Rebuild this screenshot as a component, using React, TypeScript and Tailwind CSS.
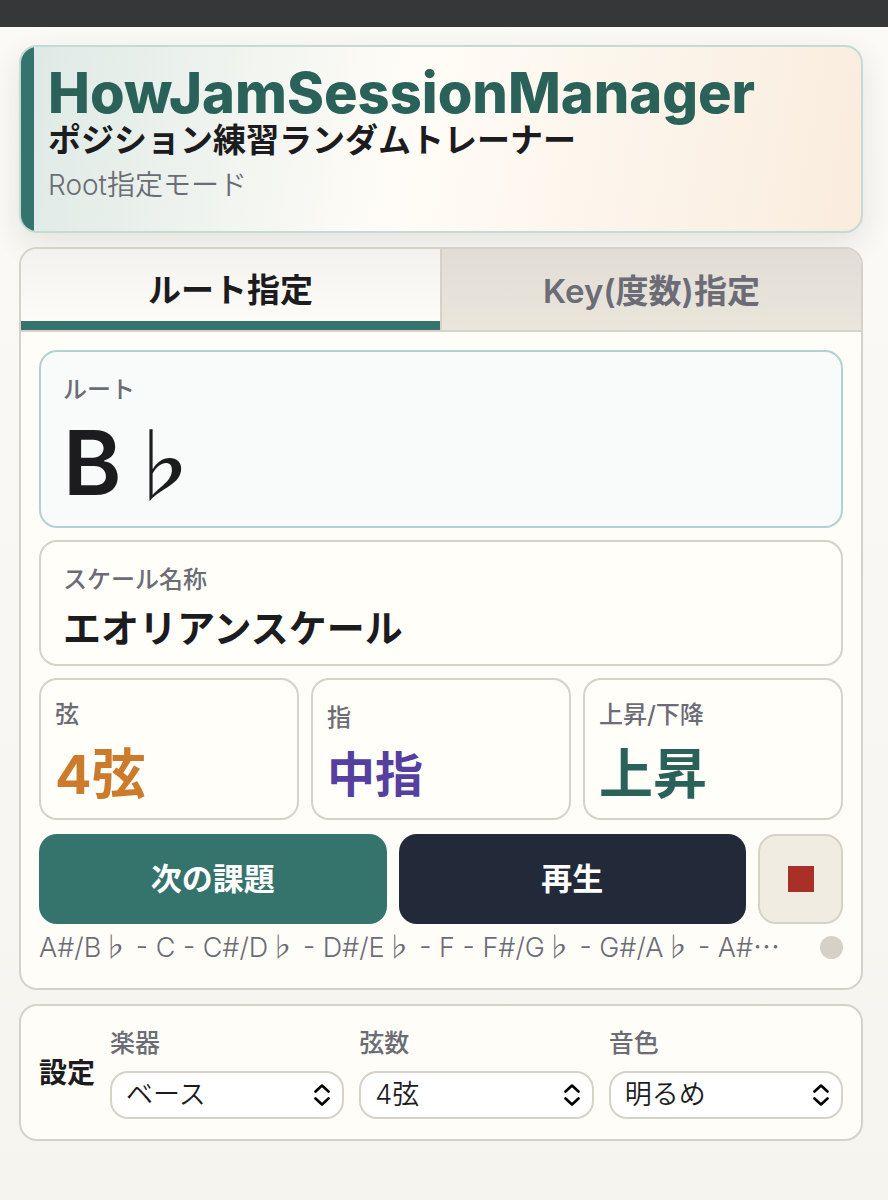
import { Fragment, useState } from 'react';

const japanese = "font-['Inter','Noto_Sans_CJK_JP',sans-serif]";

const notes = 'A#/B♭ - C - C#/D♭ - D#/E♭ - F - F#/G♭ - G#/A♭ - A#';

const settings = [
  { id: 'instrument', label: '楽器', options: ['ベース', 'ギター'] },
  { id: 'strings', label: '弦数', options: ['4弦', '5弦', '6弦'] },
  { id: 'tone', label: '音色', options: ['明るめ', '暗め'] },
];

const results = [
  { label: '弦', value: '4弦', style: 'text-[54px] leading-[76px] text-[#cb7b2b]' },
  { label: '指', value: '中指', style: 'text-[48px] leading-[70px] text-[#5540a0]' },
  { label: '上昇/下降', value: '上昇', style: 'text-[54px] leading-[76px] text-[#2a6259]' },
];

// Flat sign and ellipsis always come from the Japanese font, at full width
function Symbol({ children }: { children: string }) {
  return <span className="font-['Noto_Sans_CJK_JP',sans-serif]">{children}</span>;
}

function SettingSelect({ id, label, options }: { id: string; label: string; options: string[] }) {
  return (
    <div className="min-w-0 flex-1">
      <label htmlFor={id} className="block text-[25px] leading-8 font-medium text-[#6b6c75]">
        {label}
      </label>
      <div className="relative mt-3">
        <select
          id={id}
          className="block h-12 w-full appearance-none rounded-[18px] border-2 border-[#d6d2c8] bg-white px-3.5 text-[27px] leading-10 font-[350] text-[#1c1c1f]"
        >
          {options.map((option) => (
            <option key={option}>{option}</option>
          ))}
        </select>
        <svg
          className="pointer-events-none absolute top-3 right-3.5 h-6 w-4"
          viewBox="0 0 16 24"
          fill="none"
          stroke="black"
          strokeWidth="2.6"
          strokeLinecap="round"
          strokeLinejoin="round"
        >
          <path d="M1.5 8.5 8 2.5l6.5 6M1.5 15.5 8 21.5l6.5-6" />
        </svg>
      </div>
    </div>
  );
}

export default function App() {
  const [mode, setMode] = useState('root');

  const tabStyle = (active: boolean) =>
    active
      ? 'border-b-[9px] border-[#35736d] pt-3 text-[#1c1c1f]'
      : 'bg-linear-to-b from-[#e1dcd5] to-[#ebe6dc] pt-1 text-[#6b6c75]';

  return (
    <div lang="ja" className={`min-h-screen bg-linear-to-b from-[#fbfaf6] to-[#f5f4ef] ${japanese}`}>
      <div className="h-[27px] bg-[#363739]" />
      <div className="pt-[18px] pr-[25px] pb-[60px] pl-[19px]">
        <header className="flex h-[188px] overflow-hidden rounded-[18px] border-2 border-[#c3dbd4] bg-linear-100 from-[#dde9e5] via-[#fffcf7] via-45% to-[#f9ecdd] shadow-[0_10px_30px_rgba(30,30,40,0.1)]">
          <div className="w-[13px] shrink-0 bg-[#35736d]" />
          <div className="pt-[18px] pl-3.5">
            <h1 className="text-[56px] leading-[56px] font-extrabold text-[#2a6259]">HowJamSessionManager</h1>
            <p className="text-[33px] leading-[38px] font-bold text-[#1c1c1f]">ポジション練習ランダムトレーナー</p>
            <p className="mt-1.5 text-[28px] leading-10 font-[350] text-[#6b6c75]">Root指定モード</p>
          </div>
        </header>

        <main className="mt-3.5 overflow-hidden rounded-[18px] border-2 border-[#d6d2c8] bg-[#fffdf8]">
          <div role="tablist" className="flex h-[83px] border-b-2 border-[#d6d2c8] bg-linear-to-b from-[#f3f2ee] to-[#fffdfa] text-[33px]">
            <button
              type="button"
              role="tab"
              aria-selected={mode === 'root'}
              onClick={() => setMode('root')}
              className={`flex-1 font-bold ${tabStyle(mode === 'root')}`}
            >
              ルート指定
            </button>
            <div className="w-0.5 bg-[#d6d2c8]" />
            <button
              type="button"
              role="tab"
              aria-selected={mode === 'key'}
              onClick={() => setMode('key')}
              className={`flex-1 font-semibold ${tabStyle(mode === 'key')}`}
            >
              Key(度数)指定
            </button>
          </div>

          <div className="px-[18px] pt-[18px] pb-5">
            <section className="h-[178px] rounded-[18px] border-2 border-[#b0d3d2] bg-[#f9fbfb] px-[22px] pt-5">
              <h2 className="text-[24px] leading-9 font-medium text-[#6b6c75]">ルート</h2>
              <p className="mt-1 text-[89px] leading-[96px] font-semibold text-[#1c1c1f]">
                B<span className="text-[80px] font-medium"><Symbol>♭</Symbol></span>
              </p>
            </section>

            <section className="mt-3 h-[126px] rounded-[18px] border-2 border-[#d6d2c8] bg-[#fffef9] px-[22px] pt-5">
              <h2 className="text-[24px] leading-9 font-medium text-[#6b6c75]">スケール名称</h2>
              <p className="mt-1 text-[38px] leading-[52px] font-bold text-[#1c1c1f]">エオリアンスケール</p>
            </section>

            <div className="mt-3 grid grid-cols-3 gap-3">
              {results.map(({ label, value, style }) => (
                <section
                  key={label}
                  className="flex h-[142px] flex-col justify-center rounded-[18px] border-2 border-[#d6d2c8] bg-[#fffef9] px-3.5 pt-3"
                >
                  <h2 className="text-[24px] leading-9 font-medium text-[#6b6c75]">{label}</h2>
                  <p className={`mt-1 font-bold ${style}`}>{value}</p>
                </section>
              ))}
            </div>

            <div className="mt-3.5 flex h-[90px] gap-3 text-[31px] font-bold text-white">
              <button type="button" className="flex-1 rounded-[18px] bg-[#35736d]">
                次の課題
              </button>
              <button type="button" className="flex-1 rounded-[18px] bg-[#222938]">
                再生
              </button>
              <button
                type="button"
                aria-label="停止"
                className="flex w-[85px] items-center justify-center rounded-[18px] border-2 border-[#d6d2c8] bg-[#f1ece2]"
              >
                <span className="size-[26px] bg-[#a83026]" />
              </button>
            </div>

            <div className="mt-0.5 flex items-center justify-between">
              <p className="truncate text-[27px] leading-10 font-[350] text-[#6b6c75]">
                {notes.split('♭').map((part, i) => (
                  <Fragment key={i}>
                    {i > 0 && <Symbol>♭</Symbol>}
                    {part}
                  </Fragment>
                ))}
                <Symbol>…</Symbol>
              </p>
              <span className="size-[23px] shrink-0 rounded-full bg-[#d6d1c6]" />
            </div>
          </div>
        </main>

        <section className="mt-3.5 flex h-[137px] items-center gap-[15px] rounded-[18px] border-2 border-[#d6d2c8] bg-[#fffdf8] px-[18px]">
          <h2 className="shrink-0 text-[28px] font-bold text-[#1c1c1f]">設定</h2>
          {settings.map((setting) => (
            <SettingSelect key={setting.id} {...setting} />
          ))}
        </section>
      </div>
    </div>
  );
}
